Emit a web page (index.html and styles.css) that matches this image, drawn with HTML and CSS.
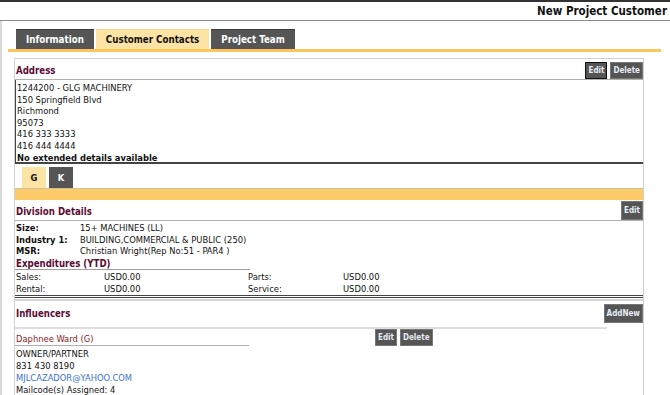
FILE: index.html
```html
<!DOCTYPE html>
<html>
<head>
<meta charset="utf-8">
<link rel="stylesheet" href="styles.css">
</head>
<body>
<div class="topbar"><h1 class="title">New Project Customer</h1></div>
<div class="main">
  <div class="tabs">
    <div class="tab">Information</div>
    <div class="tab active">Customer Contacts</div>
    <div class="tab">Project Team</div>
  </div>
  <div class="tabline"></div>
  <div class="panel">
    <div class="sec-head">
      <span class="sec-title">Address</span>
      <div class="btns"><span class="btn sel">Edit</span><span class="btn">Delete</span></div>
    </div>
    <div class="addr">
      <div>1244200 - GLG MACHINERY</div>
      <div>150 Springfield Blvd</div>
      <div>Richmond</div>
      <div>95073</div>
      <div>416 333 3333</div>
      <div>416 444 4444</div>
      <div class="b">No extended details available</div>
    </div>
    <div class="subtabs">
      <div class="subtab active">G</div>
      <div class="subtab">K</div>
    </div>
    <div class="orangebar"></div>
    <div class="div-head">
      <span class="sec-title">Division Details</span>
      <span class="btn tall">Edit</span>
    </div>
    <div class="details">
      <span class="lbl">Size:</span><span>15+ MACHINES (LL)</span>
      <span class="lbl">Industry 1:</span><span>BUILDING,COMMERCIAL &amp; PUBLIC (250)</span>
      <span class="lbl">MSR:</span><span>Christian Wright(Rep No:51 - PAR4 )</span>
    </div>
    <div class="exp-title">Expenditures (YTD)</div>
    <div class="exp">
      <span>Sales:</span><span>USD0.00</span><span>Parts:</span><span>USD0.00</span>
      <span>Rental:</span><span>USD0.00</span><span>Service:</span><span>USD0.00</span>
    </div>
    <div class="infl">
      <div class="infl-head">
        <span class="sec-title">Influencers</span>
        <span class="btn tall addnew">AddNew</span>
      </div>
      <div class="person-row">
        <div class="person-name">Daphnee Ward (G)</div>
        <div class="btns person-btns"><span class="btn">Edit</span><span class="btn">Delete</span></div>
      </div>
      <div class="person">
        <div>OWNER/PARTNER</div>
        <div>831 430 8190</div>
        <div class="email">MJLCAZADOR@YAHOO.COM</div>
        <div>Mailcode(s) Assigned: 4</div>
      </div>
    </div>
  </div>
</div>
</body>
</html>
```
FILE: styles.css
```css
* { box-sizing: border-box; }
body {
  margin: 0;
  font-family: "DejaVu Sans Condensed", "DejaVu Sans", sans-serif;
  font-size: 9.3px;
  color: #111;
  background: #fff;
  width: 670px;
  height: 395px;
  overflow: hidden;
}
.topbar {
  border-top: 2px solid #333;
  border-bottom: 1px solid #8a8a8a;
  height: 21px;
  display: flex;
  justify-content: flex-end;
  align-items: center;
  padding-right: 3px;
}
.title {
  margin: 0;
  font-size: 11.5px;
  font-weight: bold;
  color: #111;
}
.main {
  border-left: 2px solid #d8d8d8;
  padding-left: 6px;
  height: 374px;
}
.tabs {
  display: flex;
  gap: 2px;
  padding-left: 8px;
  padding-top: 8px;
}
.tab {
  height: 20px;
  padding: 0 10px;
  background: #555;
  border-top: 1px solid #3a3a3a;
  color: #fff;
  font-weight: bold;
  font-size: 9.7px;
  display: flex;
  align-items: center;
}
.tab.active {
  background: #fde4a4;
  color: #111;
  border-top-color: #f3d68a;
}
.tabline {
  height: 3px;
  background: #fcc65c;
  margin-right: 9px;
}
.panel {
  margin: 6px 26px 0 6px;
  border: 1px solid #d0d0d0;
  border-bottom: none;
  height: 340px;
}
.sec-head {
  height: 21px;
  display: flex;
  align-items: flex-end;
  justify-content: space-between;
  border-bottom: 1px solid #b0b0b0;
  padding-left: 1px;
}
.sec-head .sec-title { align-self: center; padding-top: 2px; }
.sec-title {
  color: #5e0b35;
  font-weight: bold;
  font-size: 9.6px;
}
.btns { display: flex; gap: 3px; }
.btn {
  background: #555;
  color: #e8ecf4;
  font-weight: bold;
  font-size: 8px;
  border: 1px solid #777;
  height: 17px;
  padding: 0 2px;
  display: flex;
  align-items: center;
}
.btn.sel { border-color: #111; }
.btn.tall { height: 19px; }
.addr {
  border-left: 1px solid #444;
  border-bottom: 2px solid #444;
  padding: 2px 0 0 1px;
  line-height: 11.6px;
  height: 84px;
}
.b { font-weight: bold; }
.subtabs {
  display: flex;
  gap: 3px;
  padding: 3px 0 0 7px;
  height: 24px;
}
.subtab {
  width: 24px;
  height: 21px;
  background: #555;
  color: #fff;
  font-weight: bold;
  display: flex;
  align-items: center;
  justify-content: center;
}
.subtab.active { background: #fde4a4; color: #111; }
.orangebar {
  height: 12px;
  background: #fdcb68;
  border-top: 1px solid #c9c0a8;
}
.div-head {
  height: 21px;
  display: flex;
  justify-content: space-between;
  align-items: flex-end;
  border-bottom: 1px solid #b0b0b0;
  padding-left: 1px;
}
.div-head .sec-title { align-self: center; padding-top: 3px; }
.details {
  display: grid;
  grid-template-columns: 64px auto;
  line-height: 11.6px;
  padding: 1px 0 0 1px;
}
.lbl { font-weight: bold; }
.exp-title {
  color: #5e0b35;
  font-weight: bold;
  font-size: 9.6px;
  width: 235px;
  border-bottom: 1px solid #a0a0a0;
  padding: 1px 0 0 1px;
  line-height: 11px;
}
.exp {
  display: grid;
  grid-template-columns: 88px 144px 95px auto;
  line-height: 12px;
  padding: 1px 0 0 1px;
  border-bottom: 3px double #444;
}
.infl {
  margin-top: 1px;
  border-top: 2px solid #d6d6d6;
  border-bottom: 1px solid #444;
}
.infl-head {
  display: flex;
  justify-content: space-between;
  align-items: center;
  padding: 4px 0 5px 1px;
  height: 28px;
  border-bottom: 2px solid #dedede;
  margin-right: 36px;
}
.addnew { margin-right: -36px; }
.person-row {
  display: flex;
  align-items: flex-start;
}
.person-name {
  width: 234px;
  color: #8a1c1c;
  padding: 4px 0 1px 1px;
  border-bottom: 1px solid #b0b0b0;
}
.person-btns { margin-left: 126px; margin-top: 0; }
.person {
  line-height: 12px;
  padding: 2px 0 0 1px;
}
.email { color: #3d72c8; }
```
